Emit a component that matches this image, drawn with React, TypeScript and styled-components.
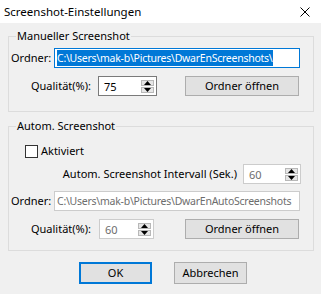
import styled, { createGlobalStyle } from 'styled-components'

const GlobalStyle = createGlobalStyle`
    html, body {
        margin: 0;
        padding: 0;
        background: #f0f0f0;
    }
    body {
        font-family: 'Noto Sans', 'Open Sans', sans-serif;
        font-size: 11px;
        color: #000;
    }
`

const Dialog = styled.div`
    width: 321px;
    height: 294px;
    background: #f0f0f0;
    display: flex;
    flex-direction: column;
`

const TitleBar = styled.div`
    height: 23px;
    background: #fff;
    display: flex;
    align-items: center;
    justify-content: space-between;
    padding: 0 11px 0 4px;
`

const TitleText = styled.span`
    font-size: 11.5px;
    line-height: 16px;
`

const Body = styled.div`
    padding: 5px 7px 0 8px;
    display: flex;
    flex-direction: column;
`

const Group = styled.fieldset<{ $top?: number; $bottom: number }>`
    margin: ${(p) => p.$top ?? 0}px 0 0 0;
    padding: 0 12px ${(p) => p.$bottom}px 2px;
    border: 1px solid #dcdcdc;
    min-width: 0;
    display: flex;
    flex-direction: column;
`

const Legend = styled.legend`
    margin-left: 5px;
    padding: 0 1px;
    line-height: 16px;
`

const Row = styled.div<{ $mt: number; $pl?: number; $end?: boolean }>`
    display: flex;
    align-items: center;
    justify-content: ${(p) => (p.$end ? 'flex-end' : 'flex-start')};
    margin-top: ${(p) => p.$mt}px;
    padding-left: ${(p) => p.$pl ?? 0}px;
`

const Label = styled.span<{ $w?: number; $right?: boolean }>`
    width: ${(p) => (p.$w ? `${p.$w}px` : 'auto')};
    text-align: ${(p) => (p.$right ? 'right' : 'left')};
    white-space: nowrap;
    line-height: 16px;
`

const TextField = styled.div<{ $focused?: boolean; $disabled?: boolean }>`
    width: 246px;
    height: 20px;
    box-sizing: border-box;
    background: #fff;
    border: 1px solid
        ${(p) => (p.$focused ? '#0078d7' : p.$disabled ? '#cccccc' : '#7a7a7a')};
    color: ${(p) => (p.$disabled ? '#6d6d6d' : '#000')};
    font-size: 10.5px;
    letter-spacing: -0.25px;
    display: flex;
    align-items: center;
    padding-left: 2px;
    white-space: nowrap;
    overflow: hidden;
`

const Selection = styled.span`
    background: #0078d7;
    color: #fff;
    line-height: 16px;
`

const Spin = styled.div<{ $w: number; $ml: number; $disabled?: boolean }>`
    width: ${(p) => p.$w}px;
    height: 20px;
    margin-left: ${(p) => p.$ml}px;
    box-sizing: border-box;
    background: #fff;
    border: 1px solid ${(p) => (p.$disabled ? '#cccccc' : '#7a7a7a')};
    color: ${(p) => (p.$disabled ? '#6d6d6d' : '#000')};
    display: flex;
    align-items: center;
    justify-content: space-between;
    padding: 0 2px 0 5px;
`

const SpinButtons = styled.div`
    display: flex;
    flex-direction: column;
    gap: 1px;
`

const SpinArrow = styled.div`
    width: 13px;
    height: 6px;
    box-sizing: border-box;
    background: #e6e6e6;
    border: 1px solid #b8b8b8;
    display: flex;
    align-items: center;
    justify-content: center;
`

const Button = styled.div<{ $w: number; $h: number; $ml?: number; $default?: boolean }>`
    width: ${(p) => p.$w}px;
    height: ${(p) => p.$h}px;
    margin-left: ${(p) => p.$ml ?? 0}px;
    box-sizing: border-box;
    background: #e1e1e1;
    border: ${(p) => (p.$default ? '2px solid #0078d7' : '1px solid #adadad')};
    display: flex;
    align-items: center;
    justify-content: center;
    line-height: 16px;
`

const CheckBox = styled.div`
    width: 13px;
    height: 13px;
    box-sizing: border-box;
    border: 1px solid #333;
    background: #fff;
    margin-right: 3px;
`

const Footer = styled.div`
    display: flex;
    padding: 11px 0 0 71px;
    gap: 22px;
`

const Arrow = ({ up }: { up?: boolean }) => (
    <svg width="7" height="4" viewBox="0 0 7 4">
        <path d={up ? 'M0 4 L3.5 0 L7 4 Z' : 'M0 0 L3.5 4 L7 0 Z'} fill="#000" />
    </svg>
)

const SpinBox = ({ value, w, ml, disabled }: { value: string; w: number; ml: number; disabled?: boolean }) => (
    <Spin $w={w} $ml={ml} $disabled={disabled}>
        <span>{value}</span>
        <SpinButtons>
            <SpinArrow>
                <Arrow up />
            </SpinArrow>
            <SpinArrow>
                <Arrow />
            </SpinArrow>
        </SpinButtons>
    </Spin>
)

export default function App() {
    return (
        <Dialog>
            <GlobalStyle />
            <TitleBar>
                <TitleText>Screenshot-Einstellungen</TitleText>
                <svg width="10" height="10" viewBox="0 0 10 10">
                    <path d="M0.5 0.5 L9.5 9.5 M9.5 0.5 L0.5 9.5" stroke="#000" strokeWidth="1" />
                </svg>
            </TitleBar>
            <Body>
                <Group $bottom={15}>
                    <Legend>Manueller Screenshot</Legend>
                    <Row $mt={4}>
                        <Label $w={43}>Ordner:</Label>
                        <TextField $focused>
                            <Selection>C:\Users\mak-b\Pictures\DwarEnScreenshots\</Selection>
                        </TextField>
                    </Row>
                    <Row $mt={8}>
                        <Label $w={80} $right>
                            Qualität(%):
                        </Label>
                        <SpinBox value="75" w={59} ml={7} />
                        <Button $w={114} $h={20} $ml={28}>
                            Ordner öffnen
                        </Button>
                    </Row>
                </Group>
                <Group $top={6} $bottom={11}>
                    <Legend>Autom. Screenshot</Legend>
                    <Row $mt={9} $pl={14}>
                        <CheckBox />
                        <Label>Aktiviert</Label>
                    </Row>
                    <Row $mt={5} $end>
                        <Label>Autom. Screenshot Intervall (Sek.)</Label>
                        <SpinBox value="60" w={58} ml={6} disabled />
                    </Row>
                    <Row $mt={7}>
                        <Label $w={43}>Ordner:</Label>
                        <TextField $disabled>C:\Users\mak-b\Pictures\DwarEnAutoScreenshots</TextField>
                    </Row>
                    <Row $mt={8}>
                        <Label $w={80} $right>
                            Qualität(%):
                        </Label>
                        <SpinBox value="60" w={55} ml={8} disabled />
                        <Button $w={114} $h={20} $ml={31}>
                            Ordner öffnen
                        </Button>
                    </Row>
                </Group>
                <Footer>
                    <Button $w={73} $h={22} $default>
                        OK
                    </Button>
                    <Button $w={73} $h={22}>
                        Abbrechen
                    </Button>
                </Footer>
            </Body>
        </Dialog>
    )
}
